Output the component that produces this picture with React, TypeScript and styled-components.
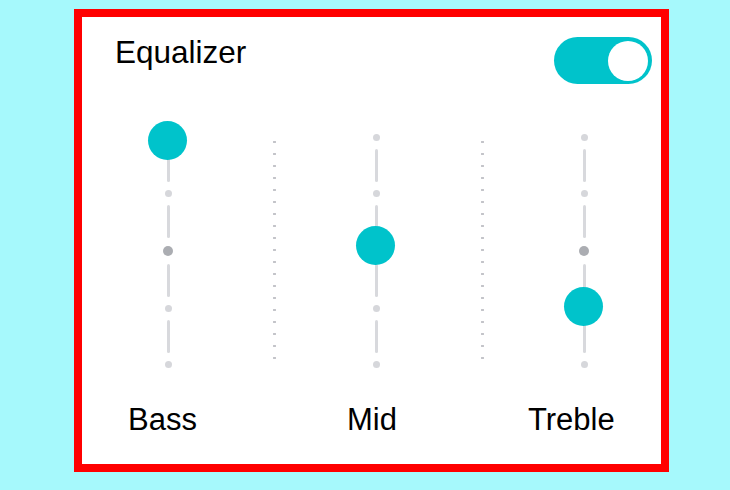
import React, { useState } from 'react';
import styled, { createGlobalStyle } from 'styled-components';

const GlobalStyle = createGlobalStyle`
  html, body {
    margin: 0;
    padding: 0;
    background: #a6f9fc;
    font-family: 'Liberation Sans', Arial, sans-serif;
  }
`;

const Page = styled.div`
  padding: 9px 0 0 74px;
`;

const Card = styled.section`
  box-sizing: border-box;
  width: 595px;
  height: 463px;
  border: 8px solid #ff0000;
  background: #ffffff;
  display: flex;
  flex-direction: column;
`;

const Header = styled.header`
  display: flex;
  justify-content: space-between;
  align-items: flex-start;
  padding: 20px 9px 0 33px;
`;

const Title = styled.h1`
  margin: 0;
  font-size: 31.5px;
  line-height: 31px;
  font-weight: 400;
  color: #000;
`;

const Toggle = styled.button<{ $on: boolean }>`
  box-sizing: border-box;
  width: 98px;
  height: 47px;
  border: none;
  border-radius: 24px;
  padding: 4px;
  display: flex;
  justify-content: ${(p) => (p.$on ? 'flex-end' : 'flex-start')};
  align-items: center;
  background: ${(p) => (p.$on ? '#00c3cb' : '#cfd0d4')};
  cursor: pointer;
`;

const Knob = styled.span`
  width: 40px;
  height: 40px;
  border-radius: 50%;
  background: #ffffff;
`;

const Bands = styled.div`
  display: flex;
  align-items: flex-start;
  padding-left: 66px;
  margin-top: 50px;
`;

const Track = styled.div`
  position: relative;
  width: 40px;
  display: flex;
  flex-direction: column;
  align-items: center;
`;

const Dot = styled.span<{ $center?: boolean }>`
  display: block;
  width: ${(p) => (p.$center ? 10 : 7)}px;
  height: ${(p) => (p.$center ? 10 : 7)}px;
  border-radius: 50%;
  background: ${(p) => (p.$center ? '#abadb2' : '#d6d7db')};
`;

const Segment = styled.span`
  display: block;
  width: 3px;
  height: 33px;
  margin: 8px 0;
  border-radius: 2px;
  background: #d8d9dd;
`;

const Thumb = styled.span`
  position: absolute;
  left: 0;
  width: 39px;
  height: 39px;
  border-radius: 50%;
  background: #00c3cb;
`;

const Divider = styled.span`
  display: block;
  width: 3px;
  height: 230px;
  margin: 2px 80px 0 85px;
  background-image: radial-gradient(circle, #c3c4c9 1.1px, transparent 1.4px);
  background-size: 3px 12px;
  background-repeat: repeat-y;
`;

const Labels = styled.div`
  display: grid;
  grid-template-columns: 219px 181px auto;
  padding-left: 46px;
  margin-top: 36px;
`;

const Label = styled.span`
  font-size: 31px;
  line-height: 31px;
  color: #000;
`;

const TRACK_SPAN = 227;

type Band = { name: string; level: number };

const bands: Band[] = [
  { name: 'Bass', level: 0.987 },
  { name: 'Mid', level: 0.524 },
  { name: 'Treble', level: 0.256 },
];

const BandSlider: React.FC<{ level: number }> = ({ level }) => {
  const center = 3.5 + (1 - level) * TRACK_SPAN;
  return (
    <Track>
      <Dot />
      <Segment />
      <Dot />
      <Segment />
      <Dot $center />
      <Segment />
      <Dot />
      <Segment />
      <Dot />
      <Thumb style={{ top: center - 19.5 }} />
    </Track>
  );
};

const App: React.FC = () => {
  const [enabled, setEnabled] = useState(true);

  return (
    <Page>
      <GlobalStyle />
      <Card>
        <Header>
          <Title>Equalizer</Title>
          <Toggle $on={enabled} onClick={() => setEnabled(!enabled)} aria-label="Toggle equalizer">
            <Knob />
          </Toggle>
        </Header>
        <Bands>
          {bands.map((b, i) => (
            <React.Fragment key={b.name}>
              {i > 0 && <Divider />}
              <BandSlider level={b.level} />
            </React.Fragment>
          ))}
        </Bands>
        <Labels>
          {bands.map((b) => (
            <Label key={b.name}>{b.name}</Label>
          ))}
        </Labels>
      </Card>
    </Page>
  );
};

export default App;
